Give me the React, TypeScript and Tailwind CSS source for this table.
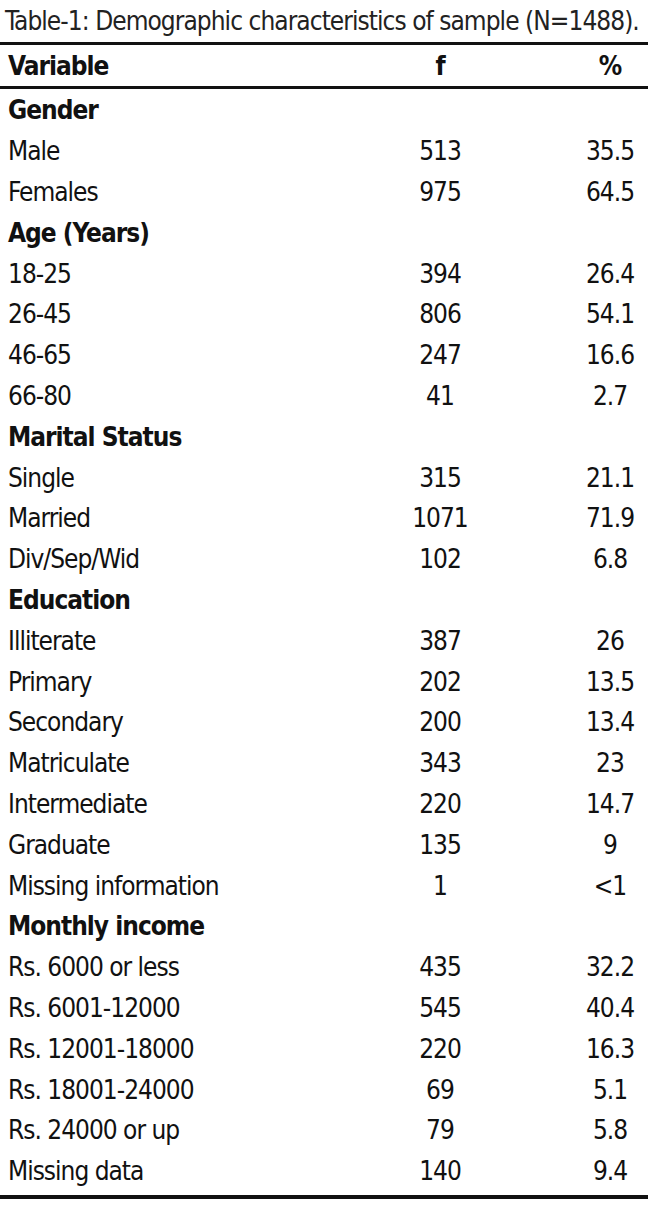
type Row = { label: string; f?: string; pct?: string; head?: boolean };

const rows: Row[] = [
  { label: 'Gender', head: true },
  { label: 'Male', f: '513', pct: '35.5' },
  { label: 'Females', f: '975', pct: '64.5' },
  { label: 'Age (Years)', head: true },
  { label: '18-25', f: '394', pct: '26.4' },
  { label: '26-45', f: '806', pct: '54.1' },
  { label: '46-65', f: '247', pct: '16.6' },
  { label: '66-80', f: '41', pct: '2.7' },
  { label: 'Marital Status', head: true },
  { label: 'Single', f: '315', pct: '21.1' },
  { label: 'Married', f: '1071', pct: '71.9' },
  { label: 'Div/Sep/Wid', f: '102', pct: '6.8' },
  { label: 'Education', head: true },
  { label: 'Illiterate', f: '387', pct: '26' },
  { label: 'Primary', f: '202', pct: '13.5' },
  { label: 'Secondary', f: '200', pct: '13.4' },
  { label: 'Matriculate', f: '343', pct: '23' },
  { label: 'Intermediate', f: '220', pct: '14.7' },
  { label: 'Graduate', f: '135', pct: '9' },
  { label: 'Missing information', f: '1', pct: '<1' },
  { label: 'Monthly income', head: true },
  { label: 'Rs. 6000 or less', f: '435', pct: '32.2' },
  { label: 'Rs. 6001-12000', f: '545', pct: '40.4' },
  { label: 'Rs. 12001-18000', f: '220', pct: '16.3' },
  { label: 'Rs. 18001-24000', f: '69', pct: '5.1' },
  { label: 'Rs. 24000 or up', f: '79', pct: '5.8' },
  { label: 'Missing data', f: '140', pct: '9.4' },
];

export default function App() {
  return (
    <div className="w-[650px] h-[1211px] bg-white text-[#111] font-['DejaVu_Sans_Condensed','Liberation_Sans',sans-serif] text-[26px] leading-none tracking-[-1px]">
      <div className="h-[42px] pl-[5px] pt-[8px] text-[#222] whitespace-nowrap tracking-[-0.95px]">
        Table-1: Demographic characteristics of sample (N=1488).
      </div>
      <div className="w-[648px] h-[3px] bg-[#111]" />
      <div className="w-[650px] h-[41px] grid grid-cols-[390px_100px_80px_80px] items-center font-bold">
        <span className="pl-[8px]">Variable</span>
        <span className="text-center">f</span>
        <span />
        <span className="text-center">%</span>
      </div>
      <div className="w-[648px] h-[3px] bg-[#111]" />
      <div className="w-[650px] pt-[1px]">
        {rows.map((r) => (
          <div key={r.label} className="h-[40.8px] grid grid-cols-[390px_100px_80px_80px] items-center">
            <span className={r.head ? 'pl-[8px] font-bold' : 'pl-[8px]'}>{r.label}</span>
            <span className="text-center">{r.f}</span>
            <span />
            <span className="text-center">{r.pct}</span>
          </div>
        ))}
      </div>
      <div className="mt-[3px] w-[648px] h-[4px] bg-[#111]" />
    </div>
  );
}
